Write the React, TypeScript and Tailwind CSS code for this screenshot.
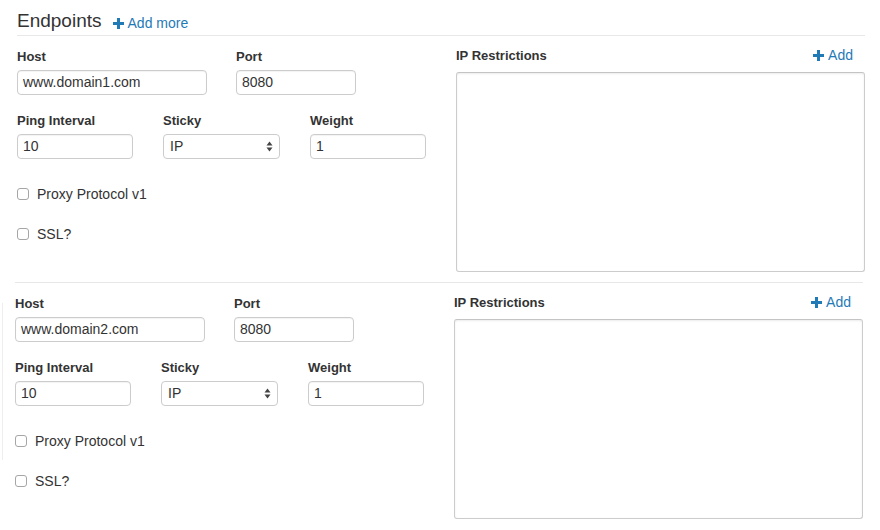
import React from 'react';

function Plus() {
    return (
        <svg width="11" height="11" viewBox="0 0 11 11" className="shrink-0">
            <path d="M4 0h3v4h4v3H7v4H4V7H0V4h4z" fill="currentColor" />
        </svg>
    );
}

function TextBox({ value, width }: { value: string; width: string }) {
    return (
        <div
            className={`${width} h-[25px] border border-[#ccc] rounded-[4px] bg-white pl-[5px] flex items-center text-[14px] text-[#333] shadow-[inset_0_1px_1px_rgba(0,0,0,0.05)]`}
        >
            {value}
        </div>
    );
}

function Label({ children }: { children: React.ReactNode }) {
    return <div className="text-[13px] leading-[18px] font-bold text-[#333]">{children}</div>;
}

function Check({ label }: { label: string }) {
    return (
        <div className="flex items-center h-[20px]">
            <span className="w-[12px] h-[12px] border border-[#a6a6a6] rounded-[3px] bg-white shrink-0" />
            <span className="ml-[8px] text-[14px] text-[#333]">{label}</span>
        </div>
    );
}

function Endpoint({ domain }: { domain: string }) {
    return (
        <div className="flex">
            {/* left fields */}
            <div className="w-[439px] flex flex-col">
                <div className="flex gap-[29px]">
                    <div className="flex flex-col gap-[4px] pt-[1px]">
                        <Label>Host</Label>
                        <TextBox value={domain} width="w-[190px]" />
                    </div>
                    <div className="flex flex-col gap-[4px] pt-[1px]">
                        <Label>Port</Label>
                        <TextBox value="8080" width="w-[120px]" />
                    </div>
                </div>
                <div className="flex gap-[30px] mt-[16px]">
                    <div className="flex flex-col gap-[4px] pt-[1px]">
                        <Label>Ping Interval</Label>
                        <TextBox value="10" width="w-[116px]" />
                    </div>
                    <div className="flex flex-col gap-[4px] pt-[1px]">
                        <Label>Sticky</Label>
                        <div className="w-[117px] h-[25px] border border-[#ccc] rounded-[4px] bg-white pl-[6px] pr-[6px] flex items-center justify-between text-[14px] text-[#333]">
                            <span>IP</span>
                            <svg width="7" height="11" viewBox="0 0 7 11">
                                <path d="M3.5 0.5L6.5 4.5H0.5z" fill="#444" />
                                <path d="M3.5 10.5L6.5 6.5H0.5z" fill="#444" />
                            </svg>
                        </div>
                    </div>
                    <div className="flex flex-col gap-[4px] pt-[1px]">
                        <Label>Weight</Label>
                        <TextBox value="1" width="w-[116px]" />
                    </div>
                </div>
                <div className="mt-[25px] flex flex-col gap-[20px]">
                    <Check label="Proxy Protocol v1" />
                    <Check label="SSL?" />
                </div>
            </div>

            {/* IP restrictions */}
            <div className="w-[409px] flex flex-col">
                <div className="flex items-center justify-between h-[18px] pr-[12px]">
                    <Label>IP Restrictions</Label>
                    <a className="flex items-center gap-[4px] text-[14px] text-[#1f7ab6] mt-[-1px]">
                        <Plus />
                        Add
                    </a>
                </div>
                <div className="mt-[7px] h-[200px] border border-[#ccc] border-t-[#c4c4c4] rounded-[3px] bg-white shadow-[inset_0_1px_2px_rgba(0,0,0,0.08)]" />
            </div>
        </div>
    );
}

export default function App() {
    return (
        <div className="relative w-[880px] h-[530px] bg-white overflow-hidden font-['Liberation_Sans',Arial,sans-serif] text-[#333]">
            <div className="pl-[17px]">
                {/* Header */}
                <div className="w-[848px] h-[36px] pt-[10px] border-b border-[#e8e8e8] flex items-baseline gap-[11px]">
                    <span className="text-[19px] leading-[22px] text-[#333]">Endpoints</span>
                    <a className="flex items-center gap-[4px] text-[14px] text-[#1f7ab6] self-center mt-[1px]">
                        <Plus />
                        Add more
                    </a>
                </div>

                <div className="pt-[11px] pb-[10px]">
                    <Endpoint domain="www.domain1.com" />
                </div>

                <div className="ml-[-2px] w-[848px] border-t border-[#e8e8e8] pt-[11px]">
                    <Endpoint domain="www.domain2.com" />
                </div>
            </div>

            {/* stray left rule */}
            <div className="absolute left-[2px] top-[303px] w-px h-[157px] bg-[#eee]" />
        </div>
    );
}
